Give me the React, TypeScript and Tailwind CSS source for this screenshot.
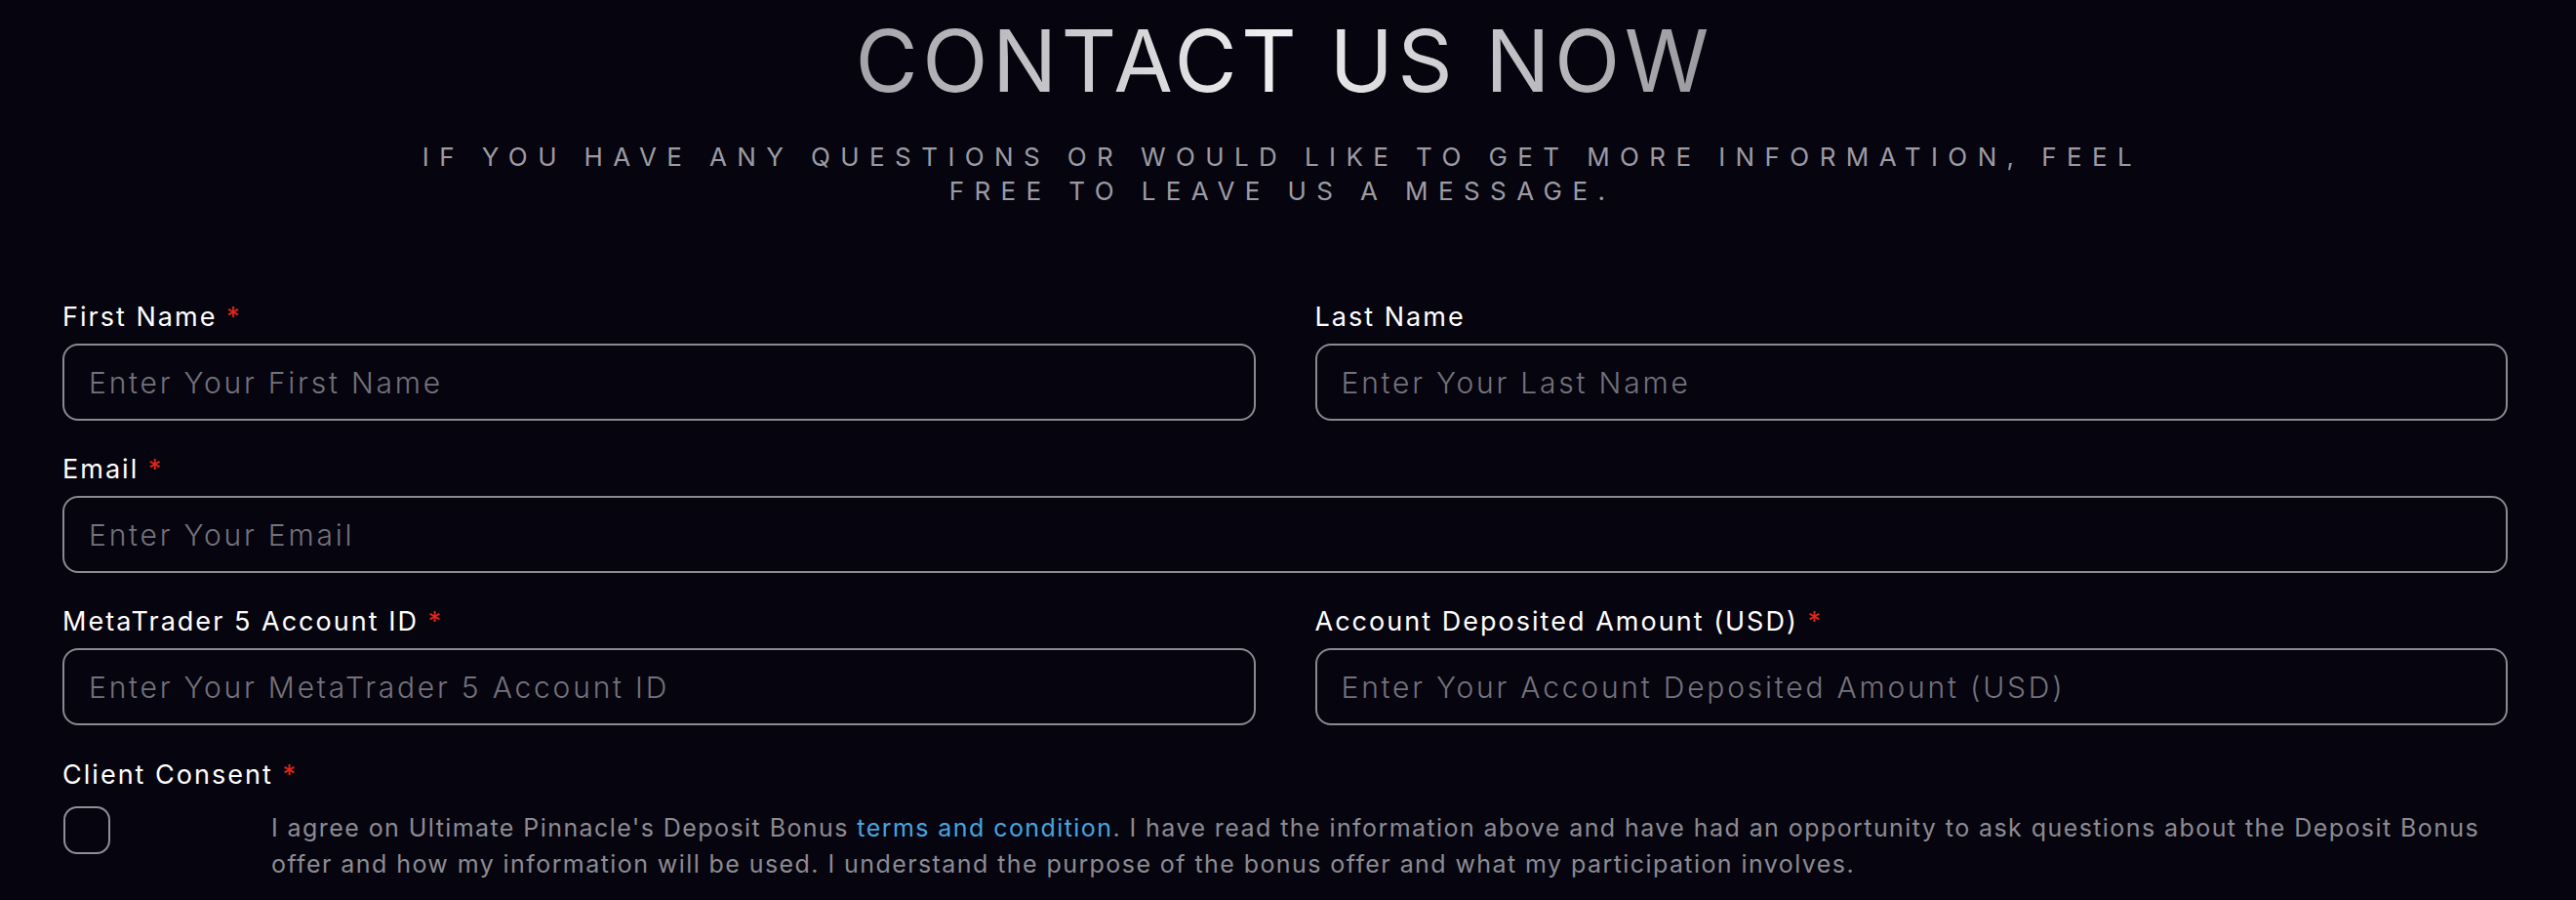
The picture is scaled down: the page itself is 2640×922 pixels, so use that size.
import React from "react";

const font = { fontFamily: "Inter, 'Noto Sans', sans-serif" } as const;

function Label({ text, required }: { text: string; required?: boolean }) {
  return (
    <label className="block h-[36px] text-[27px] leading-[36px] tracking-[0.075em] text-white">
      {text}
      {required && <span className="text-[#e3261b]"> *</span>}
    </label>
  );
}

function Field({ label, placeholder, required }: { label: string; placeholder: string; required?: boolean }) {
  return (
    <div className="flex flex-col">
      <Label text={label} required={required} />
      <input
        type="text"
        placeholder={placeholder}
        className="mt-[9px] h-[79px] w-full rounded-[16px] border-2 border-[#8a8990] bg-transparent pl-[25px] text-[30px] font-light tracking-[0.093em] text-white outline-none placeholder:text-[#74727c]"
        style={font}
      />
    </div>
  );
}

export default function App() {
  return (
    <div className="min-h-screen w-full overflow-hidden bg-[#06040e] pt-[19px]" style={font}>
      <div className="pr-[12px]">
        <h1 className="text-center text-[88px] font-normal leading-[87px] tracking-[0.05em]">
          <span className="inline-block bg-gradient-to-r from-[#a3a2a8] via-[#f0f0f2] to-[#99989e] bg-clip-text pl-[0.05em] text-transparent">
            CONTACT US NOW
          </span>
        </h1>
        <p className="mt-[37px] text-center text-[26px] leading-[35px] tracking-[0.4em] text-[#9c9ba4]">
          IF YOU HAVE ANY QUESTIONS OR WOULD LIKE TO GET MORE INFORMATION, FEEL
          <br />
          FREE TO LEAVE US A MESSAGE.
        </p>
      </div>

      <form className="mt-[94px] ml-[64px] w-[2506px]">
        <div className="grid grid-cols-2 gap-x-[61px] gap-y-[32px]">
          <Field label="First Name" placeholder="Enter Your First Name" required />
          <Field label="Last Name" placeholder="Enter Your Last Name" />
          <div className="col-span-2">
            <Field label="Email" placeholder="Enter Your Email" required />
          </div>
          <Field label="MetaTrader 5 Account ID" placeholder="Enter Your MetaTrader 5 Account ID" required />
          <Field
            label="Account Deposited Amount (USD)"
            placeholder="Enter Your Account Deposited Amount (USD)"
            required
          />
        </div>

        <div className="mt-[33px]">
          <Label text="Client Consent" required />
          <div className="mt-[14px] flex items-start">
            <button
              type="button"
              aria-label="consent"
              className="ml-[1px] h-[49px] w-[48px] shrink-0 rounded-[14px] border-2 border-[#8f8e96] bg-transparent"
            />
            <p className="ml-[165px] mt-[4px] text-[25px] leading-[37px] tracking-[0.057em] text-[#8c8b93]">
              I agree on Ultimate Pinnacle's Deposit Bonus{" "}
              <a className="text-[#45a5e0]">terms and condition</a>. I have read the information above and have had an
              opportunity to ask questions about the Deposit Bonus
              <br />
              offer and how my information will be used. I understand the purpose of the bonus offer and what my
              participation involves.
            </p>
          </div>
        </div>
      </form>
    </div>
  );
}
